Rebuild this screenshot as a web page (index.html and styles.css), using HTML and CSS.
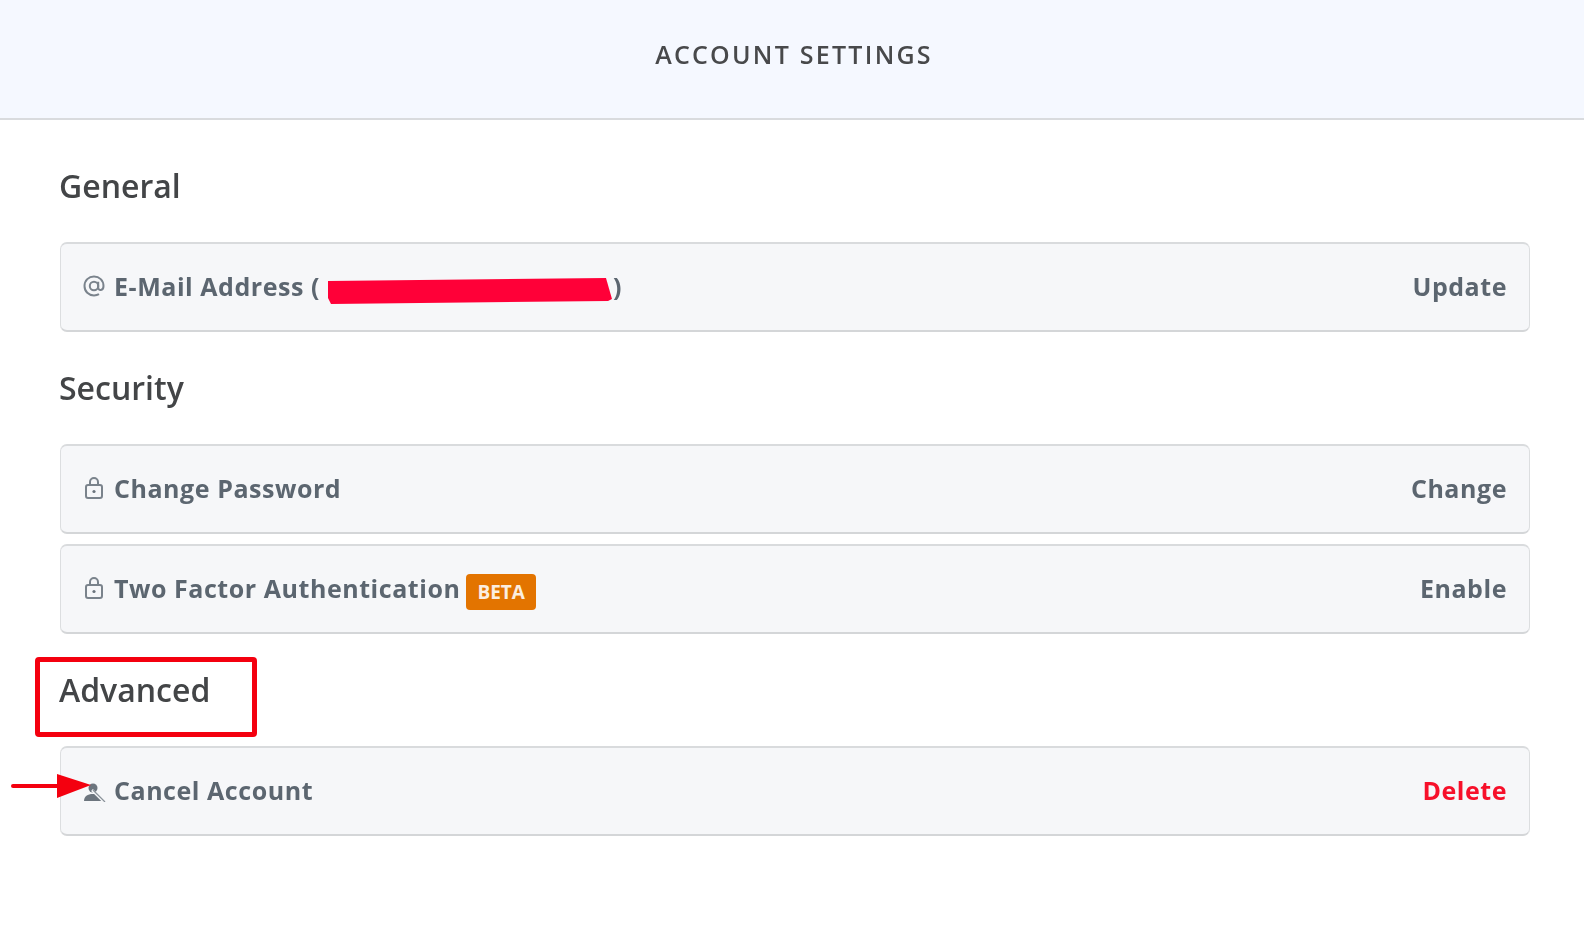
FILE: index.html
```html
<!DOCTYPE html>
<html lang="en">
<head>
<meta charset="utf-8">
<title>Account Settings</title>
<link rel="stylesheet" href="styles.css">
</head>
<body>
<div class="page">
  <header class="topbar"><h1>ACCOUNT SETTINGS</h1></header>
  <main class="content">
    <h2 class="section-title">General</h2>
    <div class="row">
      <div class="row-label">
        <svg class="icon" viewBox="0 0 24 24"><circle cx="12" cy="12" r="4.2"/><path d="M16.2 7.8v5.7c0 3.6 5.3 3.4 5.3-1.5 0-5.500-4.200-9.600-9.500-9.600S2.500 6.500 2.500 12s4.200 9.500 9.500 9.500c2 0 3.600-.4 5-1.300"/></svg>
        <span>E-Mail Address (</span>
        <span class="email-hidden">
          <svg class="redaction" viewBox="0 0 284 26" preserveAspectRatio="none"><path d="M1 3 L278 0 L284 21 L280 23 L4 26 L1 20Z"/></svg>
        </span>
        <span>)</span>
      </div>
      <span class="action">Update</span>
    </div>

    <h2 class="section-title">Security</h2>
    <div class="row">
      <div class="row-label">
        <svg class="icon" viewBox="0 0 24 24"><rect x="4" y="9" width="16" height="13" rx="2"/><path d="M8 9V6a4 4 0 0 1 8 0v3"/><circle class="dot" cx="12" cy="15.500" r="1.600"/></svg>
        <span>Change Password</span>
      </div>
      <span class="action">Change</span>
    </div>
    <div class="row row-next">
      <div class="row-label">
        <svg class="icon" viewBox="0 0 24 24"><rect x="4" y="9" width="16" height="13" rx="2"/><path d="M8 9V6a4 4 0 0 1 8 0v3"/><circle class="dot" cx="12" cy="15.500" r="1.600"/></svg>
        <span>Two Factor Authentication</span>
        <span class="badge">BETA</span>
      </div>
      <span class="action">Enable</span>
    </div>

    <h2 class="section-title section-advanced">Advanced
      <span class="highlight-box"></span>
    </h2>
    <div class="row">
      <div class="row-label">
        <svg class="icon icon-user" viewBox="-1 -3 24 24"><circle class="dot" cx="10" cy="7" r="4.500"/><path class="dot" d="M1 20c0-4.500 3.500-7 9-7 2 0 3.500.3 5 .8l5 6.200Z"/><path class="slash-gap" d="M9 9l12 12"/><path class="slash" d="M10 9l12 12"/></svg>
        <span>Cancel Account</span>
      </div>
      <span class="action action-danger">Delete</span>
      <svg class="arrow" viewBox="0 0 80 26"><path class="arrow-line" d="M2 12H48"/><path class="arrow-head" d="M46 0 L80 11 L46 24Z"/></svg>
    </div>
  </main>
</div>
</body>
</html>
```
FILE: styles.css
```css
* { box-sizing: border-box; }
html, body { margin: 0; padding: 0; background: #fff; }
body { font-family: "Open Sans", "Liberation Sans", sans-serif; }
.page { width: 1584px; height: 952px; overflow: hidden; filter: blur(0.7px); }
.topbar {
  height: 120px;
  background: #f5f8ff;
  border-bottom: 2px solid #d9dbde;
  display: flex;
  justify-content: center;
  padding: 36px 0 0 4px;
}
.topbar h1 {
  margin: 0;
  font-size: 25px;
  line-height: 36px;
  font-weight: 600;
  letter-spacing: 2.25px;
  color: #48494b;
}
.content { padding: 0 54px 0 60px; }
.section-title {
  margin: 0 0 0 -1px;
  height: 122px;
  padding-top: 44px;
  font-size: 32px;
  line-height: 44px;
  font-weight: 600;
  color: #434547;
  letter-spacing: 0;
  position: relative;
}
.row + .section-title { height: 112px; padding-top: 34px; }
.section-title.section-advanced { height: 112px; padding-top: 34px; }
.row {
  position: relative;
  height: 90px;
  background: #f6f7f9;
  border: 1px solid #dcdee0;
  border-top: 2px solid #d9dbdd;
  border-bottom: 2px solid #d4d6d8;
  border-radius: 7px;
  padding: 0 22px 3px 21px;
  display: flex;
  align-items: center;
  justify-content: space-between;
  color: #5c6670;
  font-size: 25px;
  font-weight: 700;
  letter-spacing: 0.55px;
}
.row-next { margin-top: 10px; }
.row-label { display: flex; align-items: center; }
.row-label > span:first-of-type { margin-left: 8px; }
.icon {
  width: 24px;
  height: 24px;
  fill: none;
  stroke: #7a838c;
  stroke-width: 2;
}
.icon .dot { fill: #6c757e; stroke: none; }
.icon .slash-gap { stroke: #f6f7f9; stroke-width: 2.500; }
.icon .slash { stroke: #8a929a; stroke-width: 1.200; }
.email-hidden { display: block; width: 290px; height: 26px; margin: 0 -2px 0 5px; position: relative; }
.redaction { display: block; width: 285px; height: 26px; position: absolute; left: 2px; top: 5px; fill: #ff0038; }
.badge {
  margin-left: 6px;
  background: #e37400;
  color: #fbeee0;
  font-size: 19px;
  line-height: 36px;
  height: 36px;
  padding: 0 11px;
  border-radius: 4px;
  position: relative;
  top: 4px;
  letter-spacing: 0;
}
.action-danger { color: #f7102a; }
.highlight-box {
  position: absolute;
  left: -24px;
  top: 23px;
  width: 222px;
  height: 80px;
  border: 5px solid #f4000f;
  border-radius: 4px;
}
.arrow {
  position: absolute;
  left: -52px;
  top: 26px;
  width: 84px;
  height: 26px;
}
.arrow-line { stroke: #f4000f; stroke-width: 4; stroke-linecap: round; fill: none; }
.arrow-head { fill: #f4000f; }
```
